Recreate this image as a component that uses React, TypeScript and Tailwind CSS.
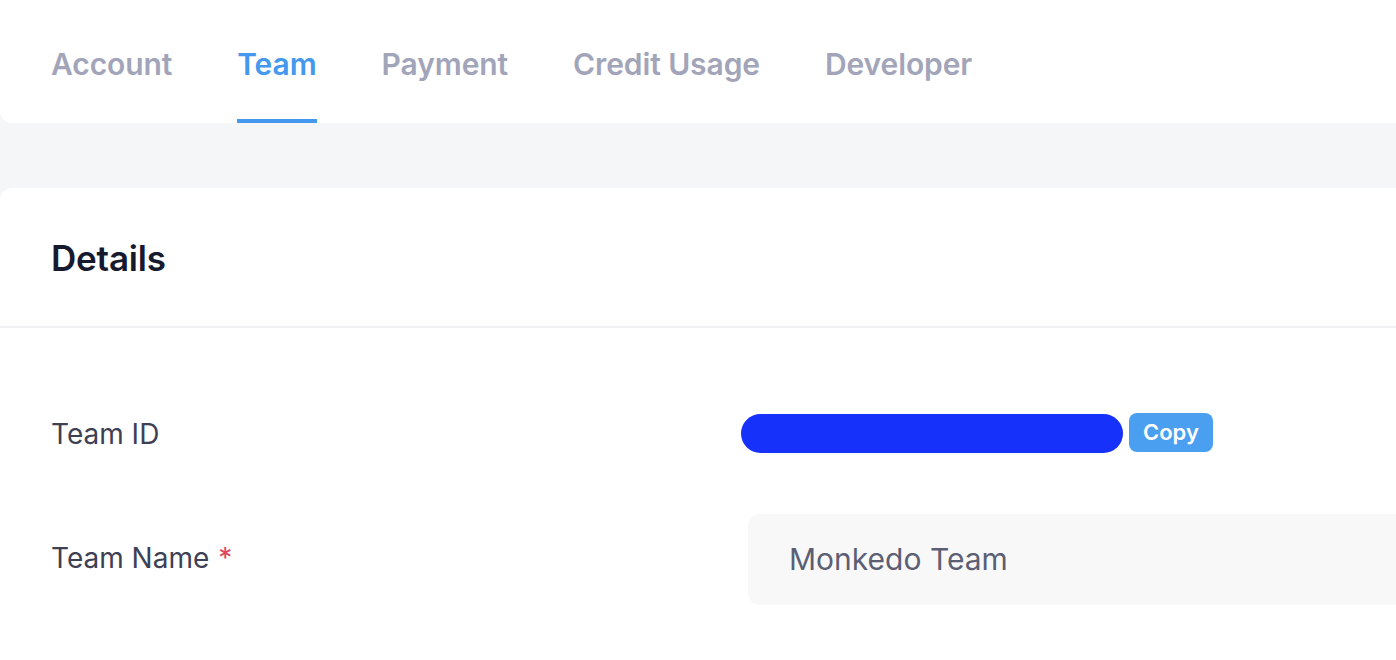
import React from "react";

const tabs = ["Account", "Team", "Payment", "Credit Usage", "Developer"];

export default function App() {
  return (
    <div
      className="w-[1396px] h-[660px] overflow-hidden bg-[#f5f6f8] flex flex-col"
      style={{ fontFamily: "Inter, 'Noto Sans', sans-serif" }}
    >
      <div className="h-[123px] shrink-0 bg-white rounded-bl-[12px] flex items-stretch px-[51px] gap-[65px]">
        {tabs.map((t) => {
          const active = t === "Team";
          return (
            <div key={t} className="relative flex items-center pt-[5px]">
              <span
                className={`text-[30px] font-semibold tracking-[-0.1px] ${
                  active ? "text-[#4499ee]" : "text-[#a2a5b9]"
                }`}
              >
                {t}
              </span>
              {active && (
                <div className="absolute left-0 right-0 bottom-0 h-[4px] bg-[#4499ee]" />
              )}
            </div>
          );
        })}
      </div>
      <div className="h-[65px] shrink-0" />
      <div className="flex-1 bg-white rounded-tl-[12px] flex flex-col">
        <div className="h-[140px] shrink-0 flex items-center px-[51px] border-b-2 border-[#eff0f2]">
          <h2 className="text-[35px] font-semibold text-[#171a2f] tracking-[-0.2px] mt-[2px]">
            Details
          </h2>
        </div>
        <div className="grid grid-cols-[690px_1fr] px-[51px] pt-[84px] gap-y-[61px]">
          <div className="flex items-center h-[39px] text-[28px] text-[#3e4054] mt-[2px]">Team ID</div>
          <div className="flex items-center gap-[6px]">
            <div className="w-[382px] h-[39px] rounded-full bg-[#1632fa] mt-[2px]" />
            <button className="h-[39px] px-[14px] rounded-[8px] bg-[#4a9ff0] text-white text-[22px] font-semibold">
              Copy
            </button>
          </div>
          <div className="flex items-center h-[91px] text-[28px] text-[#3e4054] -mt-[2px]">
            Team Name<span className="ml-[9px] text-[#e0475f]">*</span>
          </div>
          <div className="pl-[7px]">
            <div className="w-[700px] h-[91px] rounded-[12px] bg-[#f8f8f9] flex items-center px-[41px] text-[30px] text-[#5c5f74]">
              Monkedo Team
            </div>
          </div>
        </div>
      </div>
    </div>
  );
}
